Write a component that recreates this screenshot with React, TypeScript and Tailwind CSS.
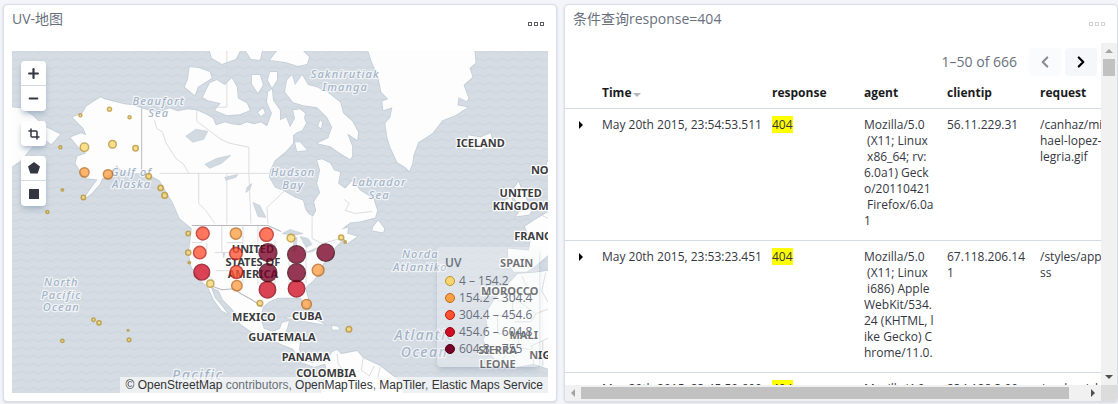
import React, { memo } from 'react';
import { ChevronLeft, ChevronRight, Crop, Minus, Plus } from 'lucide-react';

const land = [
	// North and Central America
	'M101 97 105 99 113 101 125 104 134 105 142 108 152 111 160 112 170 108 178 111 188 109 197 110 206 114 213 118 216 125 225 122 232 124 240 125 247 122 254 124 261 122 267 126 272 113 267 102 268 92 272 89 273 100 280 110 280 120 286 117 290 127 295 118 293 110 300 109 305 113 304 118 306 123 302 130 297 132 293 135 293 143 286 151 275 160 270 170 269 177 275 187 283 190 295 197 303 200 305 208 308 213 313 216 316 210 314 201 320 192 317 183 320 170 317 160 322 159 330 163 334 170 340 172 338 183 345 188 352 180 360 190 373 198 377 210 375 217 360 221 350 222 341 229 348 227 347 233 357 236 347 243 344 238 335 247 332 257 323 263 320 271 314 279 305 287 308 298 308 307 303 304 301 297 290 297 278 297 269 301 263 306 260 317 264 328 273 331 280 328 282 322 289 320 287 328 284 334 292 338 300 341 299 349 304 359 313 362 320 357 332 357 327 362 314 366 301 361 293 348 280 343 267 336 250 330 240 323 238 315 231 307 223 299 219 290 211 286 215 297 221 304 228 313 222 310 214 299 208 286 200 279 192 267 189 253 191 237 192 228 180 218 173 202 166 190 160 180 147 173 135 173 122 170 117 165 113 173 103 178 100 184 92 193 84 199 90 190 98 179 87 178 82 173 76 163 78 156 87 153 80 148 71 137 82 133 87 135 84 128 73 117 83 113 87 106Z',
	// South America
	'M332 351 337 349 341 353 357 350 363 357 380 365 390 373 397 378 404 394 320 394 327 372 325 362Z',
	// Greenland
	'M368 51 372 63 378 77 381 92 388 99 382 101 383 110 392 107 390 117 385 123 387 137 390 147 397 162 405 167 409 171 412 163 413 155 418 142 432 133 442 120 455 115 467 107 457 105 458 97 466 101 468 98 463 85 472 77 469 68 475 63 474 51Z',
	// Arctic islands
	'M285 92 287 80 292 75 295 85 302 75 308 85 316 87 327 92 340 102 343 113 352 121 358 132 357 140 347 133 352 146 352 156 350 159 340 153 330 146 317 143 328 138 332 127 327 117 317 107 303 105 293 102Z',
	'M203 97 210 83 217 80 225 85 232 78 237 87 238 98 247 103 250 110 240 114 227 115 215 110 221 103 208 100Z',
	'M188 80 190 67 199 68 210 72 212 78 198 87 195 95 185 87Z',
	'M210 51 240 51 236 59 222 64 212 58Z',
	'M252 75 260 75 263 85 258 93 252 84Z',
	'M270 72 277 72 277 80 272 88 268 80Z',
	'M277 51 303 51 309 57 307 64 298 66 285 62 270 60Z',
	'M246 51 262 51 260 60 251 59Z',
	'M295 142 300 142 307 150 297 151Z',
	'M258 112 263 108 265 113 261 116Z',
	'M320 120 322 122 321 128 318 126Z',
	// Siberia
	'M12 107 22 108 33 115 45 126 61 134 52 144 42 137 30 150 22 160 12 167Z',
	// Newfoundland
	'M373 226 378 220 384 228 383 232 372 230Z',
	// Cuba and Hispaniola
	'M285 317 300 315 318 320 325 324 308 321Z',
	'M332 325 338 326 339 329 332 329Z',
	// Iceland
	'M467 135 480 137 490 133 492 142 480 150 470 148Z',
	// British Isles
	'M513 188 518 181 520 187 525 197 531 209 529 214 515 216 521 208 513 197Z',
	'M505 199 511 197 512 206 504 210Z',
	// Scandinavia
	'M548 159 546 163 548 174Z',
	// Western Europe
	'M507 248 528 250 530 239 524 226 533 220 548 211 548 254 535 265 526 271 513 271 508 264Z',
	// Africa
	'M517 273 533 272 548 270 548 368 533 363 510 367 493 357 483 340 487 327 485 313 493 300 507 284Z',
].join(' ');

const lakes = [
	'M186 136 196 129 208 131 204 139 193 142Z',
	'M205 164 217 158 231 155 222 163 210 168Z',
	'M225 177 238 174 236 177 226 180Z',
	'M247 187 252 183 250 189 246 192Z',
	'M253 202 260 205 266 217 258 216Z',
	'M282 233 290 229 303 233 293 235Z',
	'M294 238 297 237 296 250 293 251Z',
	'M300 236 308 238 312 244 306 247Z',
	'M306 252 315 248 319 246 313 251Z',
	'M223 253 225 252 224 257Z',
].join(' ');

const borders = [
	'M160 173H269',
	'M155 120 157 128 163 132 166 142 176 158 184 164 189 173',
	'M197 110 197 121 221 139 230 143 249 147 249 173',
	'M199 173V203L206 210 215 223',
	'M227 173V223M249 173 251 223M285 190 267 207 268 223',
	'M227 51V107H218',
	'M202 225V242H192M197 263 215 281 M207 242V250M216 270H250M215 252H250M222 225V252M243 242H227M243 225V270M243 270V282',
	'M258 225V284M275 240V294M289 258V294M306 248V282',
	'M312 216 312 238 322 243 340 238M344 199 349 203 345 210 355 213 372 211',
	'M337 353 338 363 345 372 344 390M363 357 361 369 369 375 374 365M380 366 377 378 389 378M345 374 336 378',
	'M497 300H512V315H497V333M512 296 535 313 530 321 514 321M521 275 527 288 512 296M545 272 541 290 548 303M535 313 548 308M497 333 515 333 520 347 530 349M503 357 507 350 514 357M533 363 531 345 548 337M542 365V340M532 211 548 218',
].join(' ');

const countries: [string, number, number][] = [
	['ICELAND', 480, 147],
	['NO', 539, 174],
	['UNITED', 520, 197],
	['KINGDOM', 520, 210],
	['FRANC', 532, 239],
	['SPAIN', 516, 266],
	['MOROCCO', 509, 294],
	['MALI', 523, 338],
	['SIERRA', 497, 353],
	['LEONE', 497, 367],
	['NIG', 539, 358],
	['UNITED', 253, 252],
	['STATES OF', 253, 265],
	['AMERICA', 253, 277],
	['MEXICO', 254, 320],
	['CUBA', 307, 319],
	['GUATEMALA', 282, 340],
	['PANAMA', 306, 360],
	['COLOMBIA', 326, 376],
];

const seas: [string, number, number][] = [
	['Beaufort', 159, 105],
	['Sea', 159, 117],
	['Gulf of', 132, 176],
	['Alaska', 132, 188],
	['Saknirutiak', 345, 78],
	['Imanga', 345, 91],
	['Hudson', 293, 176],
	['Bay', 293, 189],
	['Labrador', 379, 186],
	['Sea', 379, 199],
	['Norda', 420, 257],
	['Atlantiko', 420, 270],
	['North', 62, 285],
	['Pacific', 62, 298],
	['Ocean', 62, 310],
];

const oceans: [string, number, number][] = [
	['Atlantic', 424, 339],
	['Ocean', 424, 356],
	['Pacific', 198, 379],
];

const buckets = [
	{
		label: '4 – 154.2',
		color: 'fill-[#fad56f] stroke-[#b8942f]',
		dots: [
			[110, 109, 2], [81, 115, 1.5], [130, 117, 1.5], [61, 147, 1.5], [85, 147, 4.2],
			[113, 144, 3.8], [136, 148, 2.7], [149, 176, 2.8], [161, 187.5, 2.6], [165, 195, 2.8],
			[63, 189.5, 1.2], [84, 197, 2.2], [48, 211.5, 1.5], [188.5, 233, 2.2], [188.5, 252, 2.6],
			[189.5, 262, 1.2], [210.5, 283, 3.6], [260, 302.5, 2.8], [94, 319, 1.7], [99.5, 322, 2.1],
			[128.5, 329.5, 0.8], [129.5, 339, 1.8], [63, 340, 1.7], [291, 237.5, 3.9], [341, 237, 2.5],
			[345, 241.5, 1.2], [348.7, 328.5, 2.8],
		],
	},
	{
		label: '154.2 – 304.4',
		color: 'fill-[#fd9f45] stroke-[#b96a1b]',
		dots: [[85, 172, 4.6], [108.5, 174, 4.6], [236, 233, 5.6], [237, 285, 5.2], [318, 269.5, 5.8], [306.5, 303.5, 4.8]],
	},
	{
		label: '304.4 – 454.6',
		color: 'fill-[#ff5230] stroke-[#bb1c12]',
		dots: [[203, 233, 6.4], [200, 252, 6.2], [236, 253, 6.2], [236.5, 271.5, 6.4], [266.5, 234, 6.8]],
	},
	{
		label: '454.6 – 604.8',
		color: 'fill-[#cf0f25] stroke-[#920012]',
		dots: [[202, 271.5, 7.8], [267.5, 289, 8.2], [296.5, 288, 8.2]],
	},
	{
		label: '604.8 – 755',
		color: 'fill-[#790026] stroke-[#4a0012]',
		dots: [[268, 252, 8.8], [268, 272, 8.8], [296.5, 254, 8.8], [296.5, 272, 8.8], [325.5, 252, 8.6]],
	},
];

const hits = [
	{
		time: 'May 20th 2015, 23:54:53.511',
		agent: 'Mozilla/5.0\n (X11; Linux\n x86_64; rv:\n6.0a1) Geck\no/20110421\n Firefox/6.0a\n1',
		clientip: '56.11.229.31',
		request: '/canhaz/mic\nhael-lopez-a\nlegria.gif',
	},
	{
		time: 'May 20th 2015, 23:53:23.451',
		agent: 'Mozilla/5.0\n (X11; Linux\n i686) Apple\nWebKit/534.\n24 (KHTML, l\nike Gecko) C\nhrome/11.0.',
		clientip: '67.118.206.14\n1',
		request: '/styles/app.c\nss',
	},
	{
		time: 'May 20th 2015, 23:45:50.690',
		agent: 'Mozilla/4.0',
		clientip: '234.188.3.90',
		request: '/canhaz/abc',
	},
];

interface PanelProps {
	title: string;
	dim?: boolean;
	children: React.ReactNode;
}

const Panel = ({ title, dim, children }: PanelProps) => (
	<section className="flex flex-col min-w-0 min-h-0 bg-white border border-[#d9dde8] rounded shadow-sm overflow-hidden">
		<header className="flex justify-between items-center shrink-0 h-7 pl-2 pr-3">
			<h2 className="text-sm text-[#69707d]">{title}</h2>
			<button
				type="button"
				aria-label="Panel options"
				className={`flex gap-[2px] pt-[10px] ${dim ? 'text-[#d3d5d9]' : 'text-[#5a5d63]'}`}
			>
				<span className="size-1 border border-current" />
				<span className="size-1 border border-current" />
				<span className="size-1 border border-current" />
			</button>
		</header>
		{children}
	</section>
);

const WorldMap = () => (
	<svg viewBox="12 51 536 341" preserveAspectRatio="xMidYMid slice" className="block w-full h-full">
		<defs>
			<pattern id="waves" width="12" height="8" patternUnits="userSpaceOnUse">
				<path d="M0 3Q3 6 6 4T12 3" fill="none" stroke="#cdd5dd" strokeWidth="1.2" />
			</pattern>
		</defs>
		<rect x="12" y="51" width="536" height="341" fill="#d5dce3" />
		<rect x="12" y="51" width="536" height="341" fill="url(#waves)" />
		<path d={land} fill="#fdfdfd" stroke="#c3cdd8" strokeWidth="1.6" strokeLinejoin="round" paintOrder="stroke" />
		<path d={lakes} fill="#d1d9e1" stroke="#c3cdd8" strokeWidth=".6" />
		<path d={borders} fill="none" stroke="#d6d6da" strokeWidth=".8" />
		<path d="M142 108V170" stroke="#c4c5ca" strokeWidth="1.2" />
		<path d="M192 225H268L281 231M211 285 222 289 234 288 241 293 252 299 262 306" fill="none" stroke="#b9bac0" />
		<g
			textAnchor="middle"
			stroke="#fff"
			strokeLinejoin="round"
			paintOrder="stroke"
			className="font-['Noto_Sans']"
		>
			<g fill="#a3b3c8" strokeWidth="2.5" strokeOpacity=".7" className="italic font-medium text-[11px] tracking-widest">
				{seas.map(([name, x, y]) => (
					<text key={`${name}${x}`} x={x} y={y}>
						{name}
					</text>
				))}
			</g>
			<g fill="#a3b3c8" strokeWidth="2.5" strokeOpacity=".7" className="italic font-medium text-sm tracking-widest">
				{oceans.map(([name, x, y]) => (
					<text key={name} x={x} y={y}>
						{name}
					</text>
				))}
			</g>
			<g fill="#3c3c40" strokeWidth="2.5" className="font-bold text-[11px]">
				{countries.map(([name, x, y]) => (
					<text key={`${name}${x}`} x={x} y={y}>
						{name}
					</text>
				))}
			</g>
		</g>
		{buckets.map(({ label, color, dots }) => (
			<g key={label} className={color} opacity=".78" strokeWidth="1.5">
				{dots.map(([x, y, r]) => (
					<circle key={`${x}-${y}`} cx={x} cy={y} r={r} />
				))}
			</g>
		))}
	</svg>
);

const MapButton = ({ label, children }: { label: string; children: React.ReactNode }) => (
	<button type="button" aria-label={label} className="flex items-center justify-center size-[25px] text-[#343741]">
		{children}
	</button>
);

const toolGroup = 'flex flex-col bg-white rounded shadow-md shadow-slate-400/60 divide-y divide-[#d3dae6]';

const MapTools = () => (
	<div className="absolute left-[9px] top-[10px] flex flex-col gap-[10px]">
		<div className={toolGroup}>
			<MapButton label="Zoom in">
				<Plus size={15} strokeWidth={3.5} />
			</MapButton>
			<MapButton label="Zoom out">
				<Minus size={13} strokeWidth={4} />
			</MapButton>
		</div>
		<div className={toolGroup}>
			<MapButton label="Fit data bounds">
				<Crop size={12} strokeWidth={3} />
			</MapButton>
		</div>
		<div className={toolGroup}>
			<MapButton label="Draw polygon">
				<svg viewBox="0 0 12 12" className="size-3 fill-current">
					<path d="M6 0 12 4.6 9.7 11.5H2.3L0 4.6Z" />
				</svg>
			</MapButton>
			<MapButton label="Draw rectangle">
				<svg viewBox="0 0 10 10" className="size-[10px] fill-current">
					<path d="M0 0H10V10H0Z" />
				</svg>
			</MapButton>
		</div>
	</div>
);

const Legend = () => (
	<div className="absolute right-[9px] bottom-[26px] w-[102px] h-[120px] pl-2 pt-2 rounded bg-[#f5f7fa]/30 shadow-md shadow-slate-400/40 text-xs font-medium text-[#69707d]">
		<h3 className="mb-px leading-4 font-semibold">UV</h3>
		<ul>
			{buckets.map(({ label, color }) => (
				<li key={label} className="flex items-center gap-1 h-[17px] whitespace-nowrap">
					<svg viewBox="0 0 10 10" className={`size-[10px] shrink-0 ${color}`}>
						<circle cx="5" cy="5" r="4.5" />
					</svg>
					{label}
				</li>
			))}
		</ul>
	</div>
);

const Attribution = () => (
	<p className="absolute right-0 bottom-0 px-[5px] bg-white/60 font-['Liberation_Sans'] text-xs leading-4 text-[#6b6e74] whitespace-nowrap">
		<a href="#osm" className="text-[#333]">© OpenStreetMap</a> contributors,{' '}
		<a href="#omt" className="text-[#333]">OpenMapTiles</a>,{' '}
		<a href="#maptiler" className="text-[#333]">MapTiler</a>,{' '}
		<a href="#ems" className="text-[#333]">Elastic Maps Service</a>
	</p>
);

const Arrow = ({ d, className }: { d: string; className: string }) => (
	<svg viewBox="0 0 8 8" className={`size-2 shrink-0 fill-current ${className}`}>
		<path d={d} />
	</svg>
);

const headCell = 'px-1 pt-[5px] pb-[7px]';
const cell = 'px-1 pt-2 pb-[11px] align-top';

const HitsTable = () => (
	<table className="table-fixed w-[592px] text-left text-xs leading-4 text-[#343741]">
		<thead>
			<tr className="border-b border-[#d3dae6] text-[#1a1c21]">
				<th className="w-[33px]" aria-label="Expand" />
				<th className={`w-[170px] ${headCell}`}>
					<span className="flex items-center gap-[2px]">
						Time
						<Arrow d="M0 2H8L4 6Z" className="text-[#b3b6bc] mt-1" />
					</span>
				</th>
				<th className={`w-[92px] ${headCell}`}>response</th>
				<th className={`w-[83px] ${headCell}`}>agent</th>
				<th className={`w-[93px] ${headCell}`}>clientip</th>
				<th className={headCell}>request</th>
			</tr>
		</thead>
		<tbody>
			{hits.map(({ time, agent, clientip, request }) => (
				<tr key={time} className="border-b border-[#d3dae6] whitespace-pre">
					<td className={cell}>
						<button type="button" aria-label="Toggle row details" className="flex items-center h-4 pl-2">
							<Arrow d="M2 0V8L6 4Z" className="text-black" />
						</button>
					</td>
					<td className={cell}>{time}</td>
					<td className={cell}>
						<mark className="bg-[#ffff00] text-inherit">404</mark>
					</td>
					<td className={cell}>{agent}</td>
					<td className={cell}>{clientip}</td>
					<td className={cell}>{request}</td>
				</tr>
			))}
		</tbody>
	</table>
);

const App = () => (
	<main className="grid grid-cols-2 grid-rows-1 gap-[7px] h-screen pl-[3px] pt-1 pb-[2px] bg-[#f3f5fa] font-['Open_Sans','Noto_Sans_CJK_SC',sans-serif]">
		<Panel title="UV-地图">
			<div className="relative flex-1 min-h-0 mt-[18px] mx-2 mb-2 overflow-hidden">
				<WorldMap />
				<MapTools />
				<Legend />
				<Attribution />
			</div>
		</Panel>
		<Panel title="条件查询response=404" dim>
			<div className="flex flex-1 min-h-0 mt-[10px]">
				<div className="flex flex-col flex-1 min-w-0">
					<div className="flex-1 min-h-0 overflow-hidden">
						<nav className="flex items-center justify-end gap-1 h-[37px] pr-1 text-sm text-[#69707d]">
							<span className="mr-2">1–50 of 666</span>
							<button
								type="button"
								aria-label="Previous page"
								disabled
								className="flex items-center justify-center w-8 h-7 rounded bg-[#fafbfd] text-[#8d8f94]"
							>
								<ChevronLeft size={18} strokeWidth={3} />
							</button>
							<button
								type="button"
								aria-label="Next page"
								className="flex items-center justify-center w-8 h-7 rounded bg-[#f5f7fa] text-black"
							>
								<ChevronRight size={18} strokeWidth={3} />
							</button>
						</nav>
						<HitsTable />
					</div>
					<div className="flex items-center shrink-0 h-4 px-1 bg-[#f1f1f1] text-[#a3a3a3]">
						<Arrow d="M6 0V8L2 4Z" className="mr-1" />
						<div className="flex-1 h-3 mr-5 bg-[#c1c1c1]" />
						<Arrow d="M2 0V8L6 4Z" className="text-[#505050]" />
					</div>
				</div>
				<div className="flex flex-col shrink-0 w-4 bg-[#f1f1f1]">
					<div className="flex flex-col items-center flex-1 py-1 text-[#a3a3a3]">
						<Arrow d="M0 6H8L4 2Z" className="mb-1" />
						<div className="w-3 h-[17px] mb-auto bg-[#c1c1c1]" />
						<Arrow d="M0 2H8L4 6Z" className="text-[#505050]" />
					</div>
					<div className="h-4 bg-[#dcdcdc]" />
				</div>
			</div>
		</Panel>
	</main>
);

export default memo(App);
